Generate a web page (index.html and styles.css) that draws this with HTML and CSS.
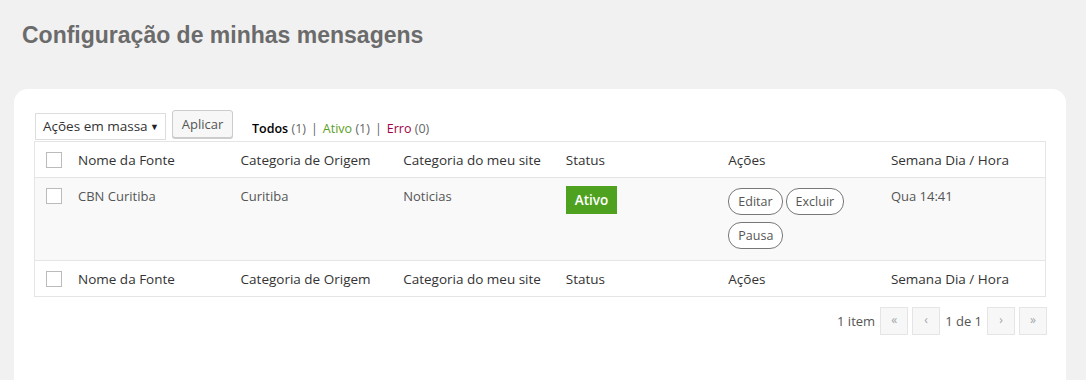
FILE: index.html
```html
<!DOCTYPE html>
<html lang="pt-BR">
<head>
    <meta charset="UTF-8">
    <title>Configuração de minhas mensagens</title>
    <link rel="stylesheet" href="styles.css">
</head>
<body>
    <h1 class="page-title">Configuração de minhas mensagens</h1>
    <div class="card">
        <div class="toolbar">
            <div class="bulk-select">Ações em massa <span class="caret">&#9660;</span></div>
            <button class="btn-apply">Aplicar</button>
            <ul class="filters">
                <li><span class="current">Todos</span> <span class="count">(1)</span></li>
                <li class="sep">|</li>
                <li><span class="active">Ativo</span> <span class="count">(1)</span></li>
                <li class="sep">|</li>
                <li><span class="error">Erro</span> <span class="count">(0)</span></li>
            </ul>
        </div>
        <table class="list-table">
            <thead>
                <tr>
                    <th class="check"><span class="box"></span></th>
                    <th>Nome da Fonte</th>
                    <th>Categoria de Origem</th>
                    <th>Categoria do meu site</th>
                    <th>Status</th>
                    <th>Ações</th>
                    <th>Semana Dia / Hora</th>
                </tr>
            </thead>
            <tbody>
                <tr>
                    <td class="check"><span class="box"></span></td>
                    <td>CBN Curitiba</td>
                    <td>Curitiba</td>
                    <td>Noticias</td>
                    <td><span class="badge">Ativo</span></td>
                    <td>
                        <div class="actions">
                            <button class="pill">Editar</button>
                            <button class="pill">Excluir</button>
                            <button class="pill">Pausa</button>
                        </div>
                    </td>
                    <td>Qua 14:41</td>
                </tr>
            </tbody>
            <tfoot>
                <tr>
                    <th class="check"><span class="box"></span></th>
                    <th>Nome da Fonte</th>
                    <th>Categoria de Origem</th>
                    <th>Categoria do meu site</th>
                    <th>Status</th>
                    <th>Ações</th>
                    <th>Semana Dia / Hora</th>
                </tr>
            </tfoot>
        </table>
        <div class="pagination">
            <span class="total">1 item</span>
            <span class="page-btn">&laquo;</span>
            <span class="page-btn">&lsaquo;</span>
            <span class="page-info">1 de 1</span>
            <span class="page-btn">&rsaquo;</span>
            <span class="page-btn">&raquo;</span>
        </div>
    </div>
</body>
</html>
```

FILE: styles.css
```css
html, body {
    overflow: hidden;
}
body {
    margin: 0;
    background-color: #f1f1f1;
    font-family: "Open Sans", "Noto Sans", sans-serif;
    font-size: 13px;
    color: #555;
}
.page-title {
    margin: 0;
    padding: 21px 22px 0;
    font-family: "Liberation Sans", Arial, sans-serif;
    font-size: 23px;
    font-weight: bold;
    color: #6b6b6b;
    line-height: 28px;
}
.card {
    margin: 40px 20px 0 14px;
    background-color: #fff;
    border-radius: 14px 14px 0 0;
    padding: 21px 20px 0 20px;
    height: 270px;
}
.toolbar {
    display: flex;
    align-items: flex-end;
    height: 30px;
    margin-bottom: 1px;
}
.bulk-select {
    width: 131px;
    height: 27px;
    box-sizing: border-box;
    border: 1px solid #ddd;
    padding: 0 7px;
    line-height: 25px;
    color: #333;
    font-size: 13.5px;
    margin-left: 1px;
    position: relative;
}
.caret {
    position: absolute;
    right: 6px;
    top: 0;
    font-size: 9px;
    color: #222;
}
.btn-apply {
    margin-left: 6px;
    height: 28px;
    width: 61px;
    border: 1px solid #ccc;
    background-color: #f7f7f7;
    color: #555;
    font-family: inherit;
    font-size: 13px;
    border-radius: 3px;
    box-shadow: 0 1px 0 #ccc;
    padding: 0;
    margin-bottom: 2px;
}
.filters {
    list-style: none;
    display: flex;
    gap: 5px;
    margin: 0 0 1px 19px;
    padding: 0;
    line-height: 20px;
    font-size: 12.5px;
}
.filters .current {
    color: #000;
    font-weight: 600;
}
.filters .count,
.filters .sep {
    color: #666;
}
.filters .active {
    color: #5a9e27;
}
.filters .error {
    color: #a00046;
}
.list-table {
    width: 100%;
    border-collapse: collapse;
    border: 1px solid #e5e5e5;
    table-layout: fixed;
}
.list-table th,
.list-table td {
    text-align: left;
    font-weight: normal;
    color: #333;
    padding: 8px 8px;
    vertical-align: middle;
}
.list-table th.check,
.list-table td.check {
    width: 24px;
    padding: 0 0 0 11px;
}
.list-table thead th {
    height: 19px;
    border-bottom: 1px solid #e5e5e5;
    font-size: 13.5px;
}
.list-table tfoot th {
    height: 19px;
    border-top: 1px solid #e5e5e5;
    font-size: 13.5px;
}
.list-table tbody tr {
    background-color: #f9f9f9;
}
.list-table tbody td {
    vertical-align: top;
    padding-top: 9px;
    padding-bottom: 11px;
    color: #555;
}
.list-table tbody td.check {
    padding-top: 10px;
}
.box {
    display: block;
    width: 14px;
    height: 14px;
    border: 1px solid #bbb;
    background-color: #fff;
}
.badge {
    display: inline-block;
    background-color: #4fa21f;
    color: #fff;
    font-weight: 600;
    font-size: 13.5px;
    padding: 0 9px;
    line-height: 28px;
    margin-top: -1px;
}
.actions {
    display: flex;
    flex-wrap: wrap;
    gap: 7px 3px;
    width: 130px;
    margin-top: 1px;
}
.pill {
    border: 1px solid #777;
    border-radius: 13px;
    background-color: #fff;
    color: #555;
    font-family: inherit;
    font-size: 12.5px;
    height: 27px;
    padding: 0 9px;
}
.pagination {
    display: flex;
    justify-content: flex-end;
    align-items: center;
    gap: 4px;
    margin: 10px -1px 0 0;
    color: #555;
}
.total {
    margin-right: 1px;
}
.page-btn {
    width: 26px;
    height: 26px;
    border: 1px solid #e5e5e5;
    background-color: #f7f7f7;
    color: #a0a5aa;
    text-align: center;
    line-height: 24px;
    font-size: 12px;
}
.page-info {
    margin: 0 1px;
}
```
